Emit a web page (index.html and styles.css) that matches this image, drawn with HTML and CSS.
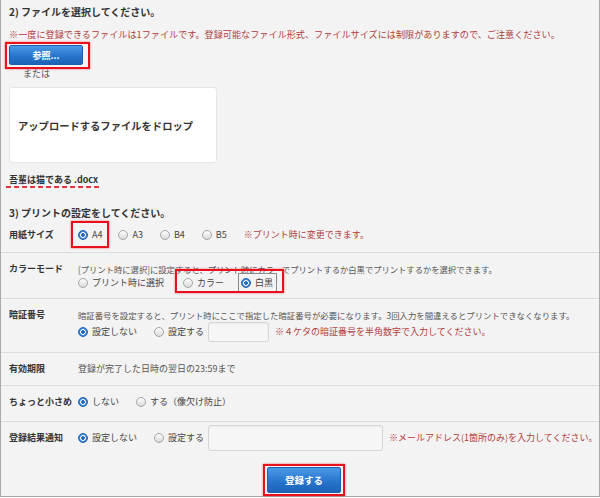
FILE: index.html
```html
<!DOCTYPE html>
<html lang="ja">
<head>
<meta charset="utf-8">
<title>ファイル登録</title>
<link rel="stylesheet" href="styles.css">
</head>
<body>
<div class="page">
  <h2 class="ttl">2) ファイルを選択してください。</h2>
  <p class="note note-lg">※一度に登録できるファイルは1ファイルです。登録可能なファイル形式、ファイルサイズには制限がありますので、ご注意ください。</p>
  <div class="browse"><span class="hl hl-browse"><button class="btn btn-browse" type="button">参照...</button></span></div>
  <p class="or">または</p>
  <div class="drop">アップロードするファイルをドロップ</div>
  <p class="file"><span class="fname">吾輩は猫である .docx</span></p>
  <h2 class="ttl ttl2">3) プリントの設定をしてください。</h2>

  <div class="rows">
    <div class="row r1">
      <div class="lbl">用紙サイズ</div>
      <div class="val">
        <div class="line">
          <span class="hl hl-a4"><span class="rd"><i class="dot on"></i>A4</span></span>
          <span class="rd"><i class="dot"></i>A3</span>
          <span class="rd"><i class="dot"></i>B4</span>
          <span class="rd"><i class="dot"></i>B5</span>
          <span class="note">※プリント時に変更できます。</span>
        </div>
      </div>
    </div>

    <div class="row r2">
      <div class="lbl">カラーモード</div>
      <div class="val">
        <div class="line desc">[プリント時に選択]に設定すると、プリント時にカラーでプリントするか白黒でプリントするかを選択できます。</div>
        <div class="line">
          <span class="rd"><i class="dot"></i>プリント時に選択</span>
          <span class="hl hl-color">
            <span class="rd"><i class="dot"></i>カラー</span>
            <span class="rd rd-focus"><i class="dot on"></i>白黒</span>
          </span>
        </div>
      </div>
    </div>

    <div class="row r3">
      <div class="lbl">暗証番号</div>
      <div class="val">
        <div class="line desc">暗証番号を設定すると、プリント時にここで指定した暗証番号が必要になります。3回入力を間違えるとプリントできなくなります。</div>
        <div class="line line-in">
          <span class="rd"><i class="dot on"></i>設定しない</span>
          <span class="rd rd-tight"><i class="dot"></i>設定する</span>
          <span class="inp inp-pin"></span>
          <span class="note">※４ケタの暗証番号を半角数字で入力してください。</span>
        </div>
      </div>
    </div>

    <div class="row r4">
      <div class="lbl">有効期限</div>
      <div class="val"><div class="line desc">登録が完了した日時の翌日の23:59まで</div></div>
    </div>

    <div class="row r5">
      <div class="lbl">ちょっと小さめ</div>
      <div class="val">
        <div class="line">
          <span class="rd"><i class="dot on"></i>しない</span>
          <span class="rd"><i class="dot"></i>する（像欠け防止）</span>
        </div>
      </div>
    </div>

    <div class="row r6">
      <div class="lbl">登録結果通知</div>
      <div class="val">
        <div class="line line-mail">
          <span class="rd"><i class="dot on"></i>設定しない</span>
          <span class="rd rd-tight"><i class="dot"></i>設定する</span>
          <span class="inp inp-mail"></span>
          <span class="note">※メールアドレス(1箇所のみ)を入力してください。</span>
        </div>
      </div>
    </div>
  </div>

  <div class="submit"><span class="hl hl-submit"><button class="btn btn-submit" type="button">登録する</button></span></div>
</div>
</body>
</html>
```

FILE: styles.css
```css
html, body {
  margin: 0;
  padding: 0;
  background: #ffffff;
}
body {
  font-family: "Noto Sans CJK JP", "Noto Sans", sans-serif;
  color: #444;
  font-size: 9px;
}
.page {
  width: 590px;
  height: 496px;
  padding: 0 0 0 8px;
  background: #f3f3f3;
  border: 1px solid #a9a9a9;
  border-top: none;
  box-sizing: content-box;
}
.ttl {
  margin: 0;
  padding-top: 5px;
  font-size: 10px;
  line-height: 14px;
  font-weight: bold;
  color: #333;
}
.ttl2 {
  padding-top: 18px;
}
.note {
  color: #b23c3c;
  font-size: 9px;
  white-space: nowrap;
}
.note-lg {
  margin: 8px 0 0;
  font-size: 9.15px;
  line-height: 14px;
}
.browse {
  margin-top: 4px;
  height: 20px;
}
.hl {
  position: relative;
  display: inline-flex;
  align-items: center;
}
.hl::after {
  content: "";
  position: absolute;
  border: 2px solid #e8101c;
  box-shadow: 0 0 2px rgba(232, 16, 28, 0.6);
  pointer-events: none;
}
.hl-browse::after {
  top: -3px; left: -4px; right: -7px; bottom: -4px;
}
.btn {
  display: block;
  margin: 0;
  padding: 0;
  width: 74px;
  border: 1px solid #1c5fae;
  border-radius: 2px;
  background: linear-gradient(#4a9ae6, #2673cc 60%, #1d62b6);
  color: #fff;
  font-family: inherit;
  font-weight: bold;
  font-size: 9px;
}
.btn-browse {
  height: 20px;
}
.btn-submit {
  height: 26px;
  font-size: 9.5px;
}
.or {
  margin: 3px 0 0 14px;
  line-height: 12px;
  color: #555;
}
.drop {
  margin-top: 7px;
  width: 208px;
  height: 76px;
  box-sizing: border-box;
  padding-left: 8px;
  display: flex;
  align-items: center;
  background: #fff;
  border: 1px solid #e6e6e6;
  border-radius: 3px;
  font-size: 10.3px;
  font-weight: bold;
  color: #333;
}
.file {
  margin: 10px 0 0;
  line-height: 14px;
}
.fname {
  display: inline-block;
  margin-left: -3px;
  padding: 0 3px 2px;
  font-weight: bold;
  color: #333;
  background-image: repeating-linear-gradient(to right, #e8323c 0 5px, transparent 5px 8px);
  background-size: 100% 2px;
  background-repeat: no-repeat;
  background-position: left bottom;
  line-height: 13px;
}
.rows {
  margin-left: -8px;
}
.row {
  display: flex;
  padding-left: 8px;
}
.row + .row {
  border-top: 1px solid #dcdcdc;
}
.lbl {
  width: 69px;
  flex: none;
  font-weight: bold;
  color: #333;
  line-height: 14px;
  white-space: nowrap;
}
.val {
  flex: 1;
}
.line {
  display: flex;
  align-items: center;
  min-height: 14px;
  line-height: 14px;
  white-space: nowrap;
}
.desc {
  color: #555;
}
.r1 { padding-top: 8px; padding-bottom: 10px; }
.r2 { padding-top: 9px; padding-bottom: 8px; }
.r2 .desc { font-size: 8.3px; }
.r3 { padding-top: 9px; padding-bottom: 10px; }
.r3 .desc { font-size: 8.4px; }
.r4 { padding-top: 9px; padding-bottom: 9px; }
.r5 { padding-top: 9px; padding-bottom: 12px; }
.r6 { padding-top: 5px; padding-bottom: 0; }
.r6 .lbl { line-height: 26px; margin-top: -2px; }
.line-in { height: 20px; }
.line-mail { height: 26px; margin-top: -2px; }
.rd {
  display: inline-flex;
  align-items: center;
  gap: 4px;
  margin-right: 17px;
  color: #444;
}
.rd-tight {
  margin-right: 4px;
}
.hl .rd:last-child {
  margin-right: 0;
}
.dot {
  display: inline-block;
  width: 10px;
  height: 10px;
  box-sizing: border-box;
  border-radius: 50%;
  border: 1px solid #a5a5a5;
  background: linear-gradient(#fdfdfd, #dadada);
}
.dot.on {
  border: 1px solid #2262b4;
  background: radial-gradient(circle, #2a6cc2 0 1.6px, #ffffff 2.1px 2.6px, #3d86d8 3.1px);
}
.hl-a4 { margin-right: 16px; }
.hl-a4 .rd { margin-right: 0; }
.hl-a4::after {
  top: -7px; left: -7px; right: -7px; bottom: -6px;
}
.hl-color { margin-left: 2px; }
.hl-color::after {
  top: -7px; left: -8px; right: -10px; bottom: -3px;
}
.rd-focus {
  outline: 1px solid #8a8a8a;
  outline-offset: 2px;
  padding-right: 1px;
}
.inp {
  display: inline-block;
  box-sizing: border-box;
  background: #f6f6f6;
  border: 1px solid #d6d6d6;
  border-radius: 3px;
  box-shadow: inset 0 1px 2px rgba(0, 0, 0, 0.05);
  margin-right: 6px;
}
.inp-pin { width: 61px; height: 20px; }
.inp-mail { width: 175px; height: 26px; }
.submit {
  display: flex;
  justify-content: center;
  margin-top: 16px;
}
.hl-submit::after {
  top: -3px; left: -4px; right: -4px; bottom: -3px;
}
```
